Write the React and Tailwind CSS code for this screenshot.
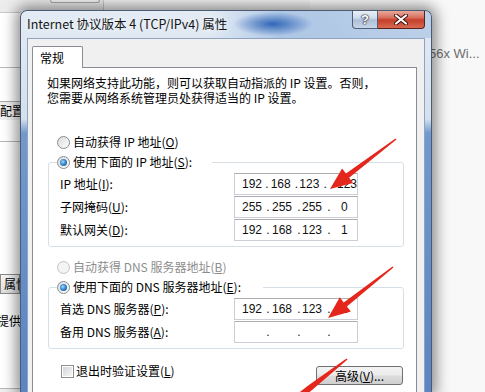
import React from "react";

const ipRows = [
  { label: "IP 地址", key: "I", parts: ["192", "168", "123", "123"] },
  { label: "子网掩码", key: "U", parts: ["255", "255", "255", "0"] },
  { label: "默认网关", key: "D", parts: ["192", "168", "123", "1"] },
];

const dnsRows = [
  { label: "首选 DNS 服务器", key: "P", parts: ["192", "168", "123", "1"] },
  { label: "备用 DNS 服务器", key: "A", parts: ["", "", "", ""] },
];

function arrowPoints(tx, ty, px, py, headLen, headW, w0, w1, withHead = true) {
  const dx = px - tx;
  const dy = py - ty;
  const len = Math.hypot(dx, dy);
  const ux = dx / len;
  const uy = dy / len;
  const nx = -uy;
  const ny = ux;
  const bx = px - ux * headLen;
  const by = py - uy * headLen;
  const pts = [
    [tx + nx * w0, ty + ny * w0],
    [bx + nx * w1, by + ny * w1],
  ];
  if (withHead) {
    pts.push([bx + nx * headW, by + ny * headW], [px, py], [bx - nx * headW, by - ny * headW]);
  } else {
    pts.push([px + nx * w1, py + ny * w1], [px - nx * w1, py - ny * w1]);
  }
  pts.push([bx - nx * w1, by - ny * w1], [tx - nx * w0, ty - ny * w0]);
  return pts.map((p) => p.map((v) => v.toFixed(1)).join(",")).join(" ");
}

function Radio({ checked, disabled }) {
  return (
    <span
      className={`flex h-[13px] w-[13px] shrink-0 items-center justify-center rounded-full border ${
        disabled ? "border-[#c4c4c4] bg-[#f4f4f4]" : "border-[#8a8c8f] bg-[linear-gradient(135deg,#d9dadc,#ffffff)]"
      }`}
    >
      {checked && (
        <span className="h-[7px] w-[7px] rounded-full bg-[radial-gradient(circle_at_40%_40%,#9fdcff_0%,#3c8ad0_45%,#153d6a_100%)]" />
      )}
    </span>
  );
}

function IpField({ parts }) {
  return (
    <div className="flex h-[22px] w-[124px] items-center border border-[#ccd0d6] border-t-[#abadb3] bg-white pl-[7px] text-[12px] leading-none text-[#111] [font-family:'Liberation_Sans',Arial,sans-serif]">
      <span className="w-[23px]">{parts[0]}</span>
      <span className="w-[6px] text-center">.</span>
      <span className="w-[25px] pl-px">{parts[1]}</span>
      <span className="w-[6px] text-center">.</span>
      <span className="w-[24px]">{parts[2]}</span>
      <span className="w-[6px] text-center">.</span>
      <span className="pl-[9px]">{parts[3]}</span>
    </div>
  );
}

function Group({ legend, legendKey, pad, rows }) {
  return (
    <fieldset className="ml-[15px] w-[356px] rounded-[3px] border border-[#d5dfe5] pb-[5px]">
      <legend className={`ml-[8px] flex h-[20px] items-center gap-[3px] p-0 ${pad}`}>
        <Radio checked />
        <span>
          {legend}(<u>{legendKey}</u>):
        </span>
      </legend>
      <div className="flex flex-col pl-[11px]">
        {rows.map((r) => (
          <div key={r.key} className="flex h-[23px] items-center">
            <span className="w-[174px]">
              {r.label}(<u>{r.key}</u>):
            </span>
            <IpField parts={r.parts} />
          </div>
        ))}
      </div>
    </fieldset>
  );
}

function LeftWindow() {
  return (
    <div className="flex w-[20px] shrink-0 flex-col overflow-hidden bg-white text-[12px] leading-none text-black [font-family:'Noto_Sans_CJK_SC',sans-serif]">
      <div className="h-[3px] border-b border-[#c9c9c9] bg-[#ececec]" />
      <div className="h-[55px] border-b border-[#b9b9b9]" />
      <div className="h-[34px] border-b border-[#a9a9a9]" />
      <div className="flex h-[18px] items-center whitespace-nowrap bg-[#f0f0f0]">配置</div>
      <div className="h-[22px] border-b border-[#b5b5b5]" />
      <div className="h-[132px]" />
      <div className="flex h-[20px] items-center whitespace-nowrap border border-[#8b8b8b] bg-[linear-gradient(180deg,#f7f7f7,#dedede)] pl-[3px]">
        属性
      </div>
      <div className="mt-[20px] flex h-[14px] items-center whitespace-nowrap -ml-[3px]">提供</div>
      <div className="flex-1" />
      <div className="h-[4px] border-t border-[#b5b5b5] bg-[#eeeeee]" />
    </div>
  );
}

export default function App() {
  return (
    <div className="relative flex h-[392px] w-[485px] flex-col overflow-hidden bg-[#f8f8f8] text-black [font-family:'Noto_Sans_CJK_SC',sans-serif]">
      {/* desktop strip above the dialog */}
      <div className="flex h-[10px] shrink-0">
        <div className="flex w-[103px] bg-[#ececec] pl-[50px]">
          <div className="h-[3px] w-[50px] rounded-b-[3px] border border-t-0 border-[#a9a9a9] bg-[#f3f3f3]" />
        </div>
        <div className="w-[207px] border-l border-[#c9c9c9] bg-[#f2f2f2]" />
        <div className="flex-1 bg-[#f8f8f8]" />
      </div>

      <div className="flex flex-1">
        <LeftWindow />

        {/* dialog */}
        <div className="relative z-10 flex h-[382px] w-[412px] shrink-0 flex-col overflow-hidden rounded-t-[7px] border border-b-0 border-[#4b5b72] bg-[linear-gradient(180deg,#e3ebf4_0px,#d4e0ed_108px,#7199cd_122px,#5b85c3_100%)] px-[6px] shadow-[0_0_14px_4px_rgba(0,0,0,0.45)]">
          {/* title bar */}
          <div className="-mx-[6px] flex h-[27px] shrink-0 bg-[radial-gradient(ellipse_40px_12px_at_252px_13px,rgba(25,85,175,0.85),rgba(25,85,175,0)),linear-gradient(90deg,rgba(160,190,225,0)_0px,rgba(160,190,225,0)_190px,rgba(140,175,220,0.6)_260px,rgba(150,182,222,0.5)_100%)] px-[6px]">
            <span className="self-center whitespace-nowrap text-[12.5px] leading-none text-[#151515] [text-shadow:0_0_6px_#ffffff]">
              Internet 协议版本 4 (TCP/IPv4) 属性
            </span>
            <div className="ml-auto -mt-px flex self-start">
              <div className="flex h-[19px] w-[26px] items-center justify-center rounded-bl-[4px] border border-t-0 border-[#4f5f76] bg-[linear-gradient(180deg,#edf2f8_0%,#cfdcec_45%,#aebfd6_55%,#c7d6e8_100%)] text-[13px] font-bold leading-none text-white [font-family:'Liberation_Sans',Arial,sans-serif] [text-shadow:0_0_1px_#1b2636,0_0_1px_#1b2636,0_0_2px_#1b2636]">
                ?
              </div>
              <div className="flex h-[19px] w-[47px] items-center justify-center rounded-br-[4px] border border-l-0 border-t-0 border-[#5a2219] bg-[linear-gradient(180deg,#eab1a5_0%,#d9705e_42%,#c63f2a_55%,#d86a4f_100%)]">
                <svg width="14" height="11" viewBox="0 0 14 11">
                  <path d="M2 1.5 L12 9.5 M12 1.5 L2 9.5" stroke="#3a120c" strokeWidth="4" strokeLinecap="round" />
                  <path d="M2 1.5 L12 9.5 M12 1.5 L2 9.5" stroke="#ffffff" strokeWidth="2.2" strokeLinecap="round" />
                </svg>
              </div>
            </div>
          </div>

          {/* client area */}
          <div className="flex flex-1 flex-col border border-b-0 border-[#8ea4c1] bg-[#f0f0f0] pl-[4px] pt-[7px]">
            <div className="relative z-10 -mb-px flex h-[22px] w-[51px] items-center rounded-t-[2px] border border-b-0 border-[#898c95] bg-white pl-[7px] text-[12px] leading-none">
              常规
            </div>
            <div className="flex w-[385px] flex-1 flex-col border border-b-0 border-[#898c95] bg-white text-[12px] leading-none">
              <div className="flex flex-col pl-[14px] pt-[7px]">
                <span className="h-[15px] leading-[15px]">如果网络支持此功能，则可以获取自动指派的 IP 设置。否则，</span>
                <span className="h-[15px] leading-[15px]">您需要从网络系统管理员处获得适当的 IP 设置。</span>
              </div>

              <div className="mt-[27px] flex h-[20px] items-center gap-[3px] pl-[24px]">
                <Radio />
                <span>
                  自动获得 IP 地址(<u>O</u>)
                </span>
              </div>
              <Group legend="使用下面的 IP 地址" legendKey="S" pad="pr-[20px]" rows={ipRows} />

              <div className="mt-[10px] flex h-[20px] items-center gap-[3px] pl-[24px] text-[#8d8d8d]">
                <Radio disabled />
                <span>
                  自动获得 DNS 服务器地址(<u>B</u>)
                </span>
              </div>
              <Group legend="使用下面的 DNS 服务器地址" legendKey="E" pad="pr-[22px]" rows={dnsRows} />

              <div className="mt-[15px] flex items-start pl-[28px]">
                <div className="flex h-[14px] items-center gap-[2px]">
                  <span className="flex h-[13px] w-[13px] items-center justify-center border border-[#8e8f8f] bg-white">
                    <span className="h-[9px] w-[9px] bg-[linear-gradient(135deg,#d3d4d6,#f7f7f7)]" />
                  </span>
                  <span>
                    退出时验证设置(<u>L</u>)
                  </span>
                </div>
                <div className="ml-auto mr-[13px] mt-[2px] flex h-[19px] w-[87px] items-center justify-center rounded-[3px] border border-[#707070] bg-[linear-gradient(180deg,#f4f4f4_0%,#ebebeb_48%,#dddddd_52%,#cfcfcf_100%)]">
                  高级(<u>V</u>)...
                </div>
              </div>
            </div>
          </div>
        </div>

        {/* desktop to the right */}
        <div className="flex-1 overflow-hidden bg-[#f8f8f8] pt-[29px]">
          <span className="-ml-[3px] whitespace-nowrap text-[13px] leading-none text-[#6e6e6e] [font-family:'Liberation_Sans',Arial,sans-serif]">
            56x Wi...
          </span>
        </div>
      </div>

      {/* red annotation arrows */}
      <svg className="pointer-events-none absolute left-0 top-0 z-20" width="485" height="392" viewBox="0 0 485 392">
        <polygon points={arrowPoints(396, 139, 330, 189, 22, 9, 0.8, 2.6)} fill="#e4261c" />
        <polygon points={arrowPoints(393, 267, 328, 318, 22, 9, 0.8, 2.6)} fill="#e4261c" />
        <polygon points={arrowPoints(347, 359, 292, 402, 22, 9, 0.8, 3, false)} fill="#e4261c" />
      </svg>
    </div>
  );
}
